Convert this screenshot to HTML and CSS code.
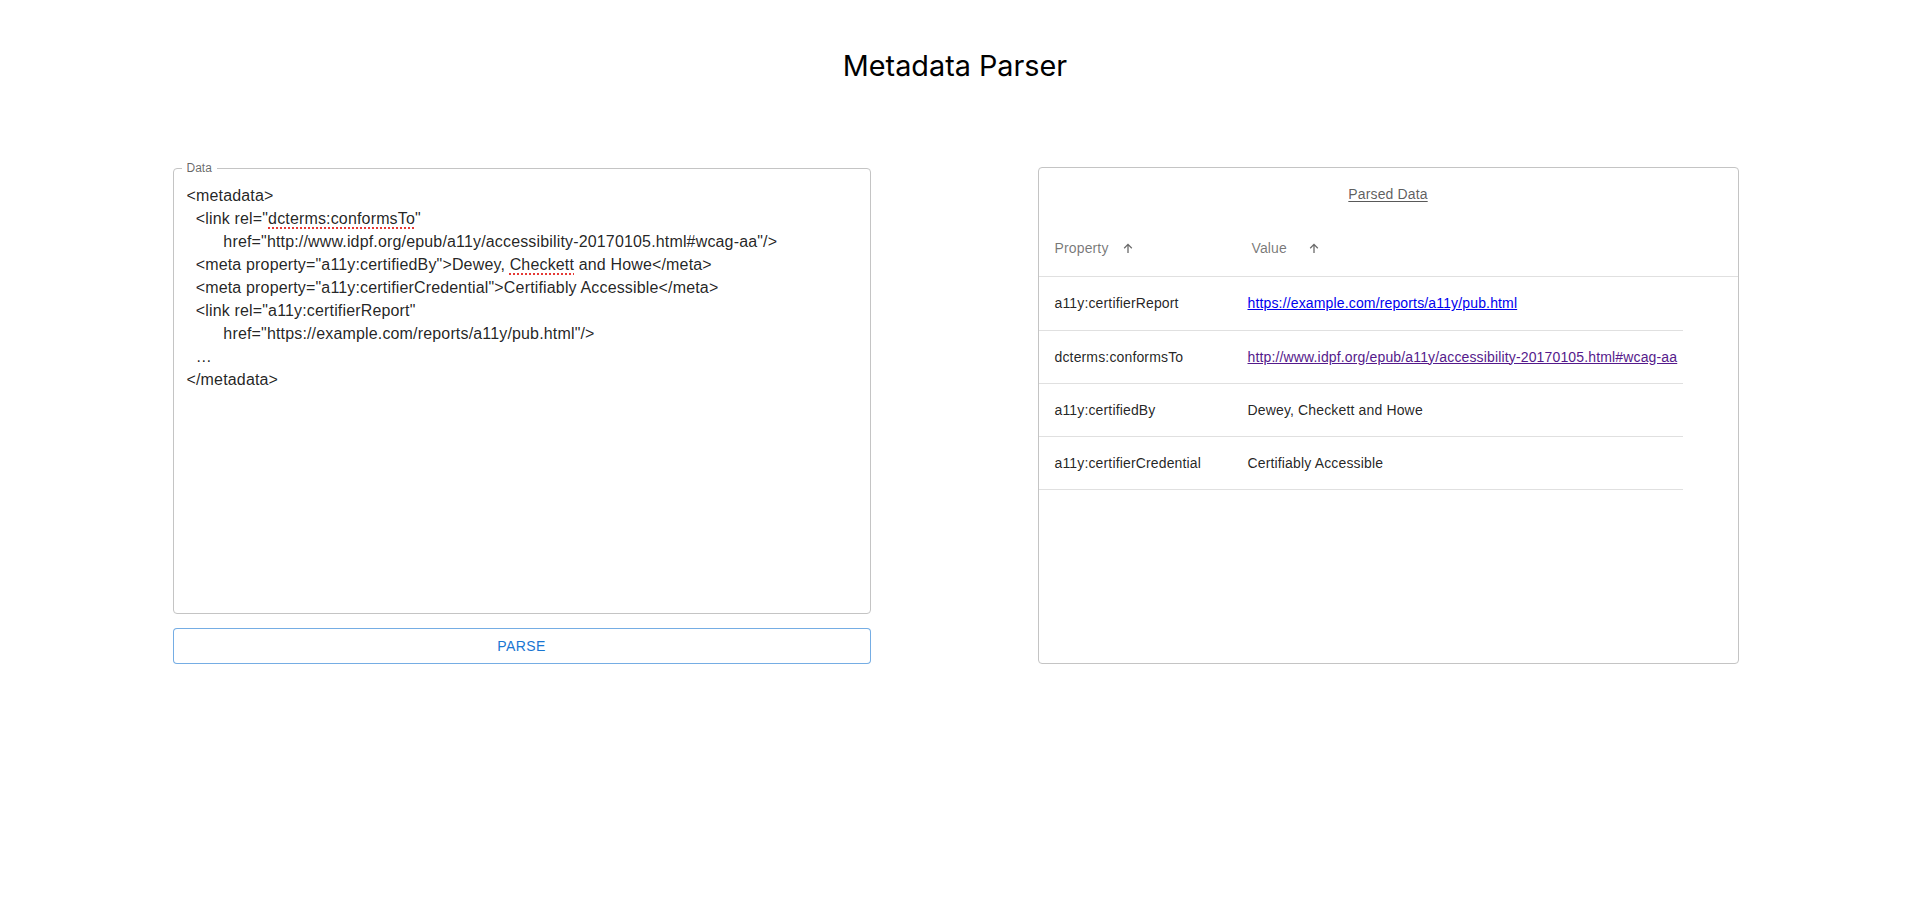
FILE: index.html
```html
<!DOCTYPE html>
<html lang="en">
<head>
<meta charset="utf-8">
<title>Metadata Parser</title>
<link rel="stylesheet" href="styles.css">
</head>
<body>
<header class="page-header">
  <h1 class="page-title">Metadata Parser</h1>
</header>
<main class="columns">
  <section class="input-col">
    <div class="textfield">
      <span class="textfield-label">Data</span>
      <div class="textfield-input">&lt;metadata&gt;
  &lt;link rel="<span class="misspelled">dcterms:conformsTo</span>"
        href="http://www.idpf.org/epub/a11y/accessibility-20170105.html#wcag-aa"/&gt;
  &lt;meta property="a11y:certifiedBy"&gt;Dewey, <span class="misspelled">Checkett</span> and Howe&lt;/meta&gt;
  &lt;meta property="a11y:certifierCredential"&gt;Certifiably Accessible&lt;/meta&gt;
  &lt;link rel="a11y:certifierReport"
        href="https://example.com/reports/a11y/pub.html"/&gt;
  …
&lt;/metadata&gt;</div>
    </div>
    <button class="parse-btn" type="button">Parse</button>
  </section>
  <section class="output-panel">
    <div class="panel-caption"><span class="caption-text">Parsed Data</span></div>
    <div class="table-head">
      <div class="head-cell head-prop">
        <span class="sort-label">Property</span>
        <svg class="sort-icon sort-icon-prop" viewBox="0 0 10 10" width="10" height="10"><path d="M5 10V1.4M1.2 5.2L5 1.4l3.8 3.8" fill="none" stroke="#6b6b6b" stroke-width="1.3"/></svg>
      </div>
      <div class="head-cell head-val">
        <span class="sort-label">Value</span>
        <svg class="sort-icon sort-icon-val" viewBox="0 0 10 10" width="10" height="10"><path d="M5 10V1.4M1.2 5.2L5 1.4l3.8 3.8" fill="none" stroke="#6b6b6b" stroke-width="1.3"/></svg>
      </div>
    </div>
    <table class="data-table">
      <tbody>
        <tr>
          <td class="cell-prop">a11y:certifierReport</td>
          <td class="cell-val"><a class="link" href="#">https://example.com/reports/a11y/pub.html</a></td>
        </tr>
        <tr>
          <td class="cell-prop">dcterms:conformsTo</td>
          <td class="cell-val"><a class="link visited" href="#">http://www.idpf.org/epub/a11y/accessibility-20170105.html#wcag-aa</a></td>
        </tr>
        <tr>
          <td class="cell-prop">a11y:certifiedBy</td>
          <td class="cell-val">Dewey, Checkett and Howe</td>
        </tr>
        <tr>
          <td class="cell-prop">a11y:certifierCredential</td>
          <td class="cell-val">Certifiably Accessible</td>
        </tr>
      </tbody>
    </table>
  </section>
</main>
</body>
</html>
```

FILE: styles.css
```css
html, body {
  margin: 0;
  padding: 0;
  background: #ffffff;
}

body {
  font-family: "Liberation Sans", Arial, sans-serif;
  color: rgba(0, 0, 0, 0.87);
}

.page-header {
  padding-top: 48px;
  text-align: center;
}

.page-title {
  margin: 0;
  font-family: Inter, "Liberation Sans", sans-serif;
  font-weight: 400;
  font-size: 28.8px;
  line-height: 36px;
  color: #000;
}

.columns {
  display: grid;
  grid-template-columns: 698px 701px;
  column-gap: 167px;
  justify-content: center;
  align-items: end;
  margin-top: 83px;
  padding-left: 1px;
}

.input-col {
  display: flex;
  flex-direction: column;
  gap: 14px;
}

.textfield {
  position: relative;
  box-sizing: border-box;
  height: 446px;
  border: 1px solid #c4c4c4;
  border-radius: 4px;
  padding: 15px 13px;
}

.textfield-label {
  position: absolute;
  top: -9px;
  left: 8px;
  padding: 0 5px;
  background: #fff;
  font-size: 12px;
  line-height: 16px;
  color: rgba(0, 0, 0, 0.6);
}

.textfield-input {
  white-space: pre;
  font-size: 16px;
  line-height: 23px;
  letter-spacing: 0.16px;
  color: rgba(0, 0, 0, 0.87);
}

.misspelled {
  text-decoration: underline dotted #e53935;
  text-decoration-thickness: 2px;
  text-underline-offset: 3px;
}

.parse-btn {
  box-sizing: border-box;
  height: 36px;
  width: 100%;
  border: 1px solid rgba(25, 118, 210, 0.6);
  border-radius: 4px;
  background: #fff;
  color: #1976d2;
  font-family: "Liberation Sans", Arial, sans-serif;
  font-size: 14px;
  font-weight: 400;
  letter-spacing: 0.4px;
  text-transform: uppercase;
  padding: 0;
  cursor: pointer;
}

.output-panel {
  box-sizing: border-box;
  height: 497px;
  border: 1px solid #c4c4c4;
  border-radius: 4px;
}

.panel-caption {
  height: 52px;
  display: flex;
  align-items: center;
  justify-content: center;
  font-size: 14px;
  line-height: 20px;
  letter-spacing: 0.14px;
}

.caption-text {
  color: rgba(0, 0, 0, 0.65);
  text-decoration: underline;
  text-underline-offset: 2px;
}

.table-head {
  display: flex;
  height: 57px;
  box-sizing: border-box;
  border-bottom: 1px solid #e0e0e0;
}

.head-cell {
  display: flex;
  align-items: center;
  box-sizing: border-box;
  padding: 0 16px;
  font-size: 14px;
  line-height: 24px;
  letter-spacing: 0.14px;
  color: rgba(0, 0, 0, 0.55);
}

.head-prop {
  width: 197px;
}

.sort-icon {
  display: block;
}

.sort-icon-prop {
  margin-left: 14px;
}

.sort-icon-val {
  margin-left: 22px;
}

.data-table {
  border-collapse: collapse;
  border-spacing: 0;
  font-size: 14px;
  line-height: 20px;
  letter-spacing: 0.15px;
}

.data-table td {
  height: 53px;
  box-sizing: border-box;
  padding: 0 16px;
  border-bottom: 1px solid #e0e0e0;
  vertical-align: middle;
  color: rgba(0, 0, 0, 0.87);
  white-space: nowrap;
}

.data-table .cell-prop {
  width: 193px;
}

.data-table .cell-val {
  width: 451px;
  padding-right: 0;
}

.link {
  color: #0000ee;
  text-decoration: underline;
}

.link.visited {
  color: #551a8b;
}
```
